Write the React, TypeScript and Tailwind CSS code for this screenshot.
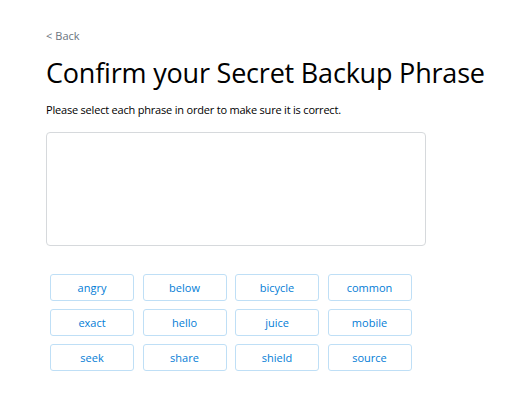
const words = [
  "angry",
  "below",
  "bicycle",
  "common",
  "exact",
  "hello",
  "juice",
  "mobile",
  "seek",
  "share",
  "shield",
  "source",
];

export default function App() {
  return (
    <div
      className="w-[512px] h-[419px] bg-white pl-[46px] pt-[29px]"
      style={{ fontFamily: '"Open Sans", "Liberation Sans", sans-serif' }}
    >
      <button className="text-[11px] leading-[14px] text-[#6a737d] flex items-center gap-[3px]">
        <span>&lt;</span>
        <span>Back</span>
      </button>
      <h1 className="mt-[12px] text-[27px] leading-[36px] text-black font-normal tracking-[-0.2px] whitespace-nowrap">
        Confirm your Secret Backup Phrase
      </h1>
      <p className="mt-[11px] text-[11px] leading-[16px] text-black tracking-[-0.2px]">
        Please select each phrase in order to make sure it is correct.
      </p>
      <div className="mt-[14px] w-[380px] h-[114px] border border-[#d6d9dc] rounded-[4px]" />
      <div className="mt-[28px] ml-[4px] grid grid-cols-[repeat(4,84px)] gap-x-[8.5px] gap-y-[8px] w-fit">
        {words.map((w) => (
          <button
            key={w}
            className="h-[27px] rounded-[3px] border border-[#bfdff6] text-[#037dd6] text-[11px] font-medium leading-none"
          >
            {w}
          </button>
        ))}
      </div>
    </div>
  );
}
